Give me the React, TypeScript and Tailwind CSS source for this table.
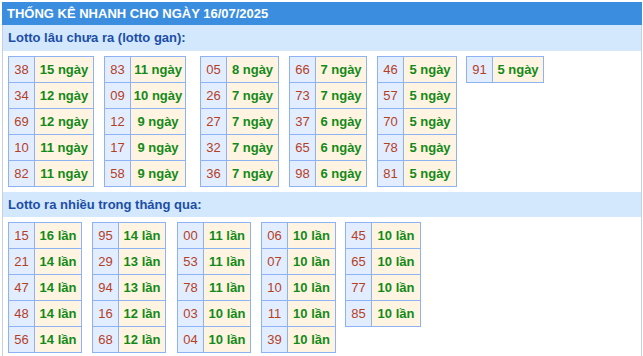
import React from "react";

type Row = [string, string];
type Tbl = { ml: string; dw: string; rows: Row[] };

const s1: Tbl[] = [
  { ml: "ml-[5px]", dw: "w-[59px]", rows: [["38", "15"], ["34", "12"], ["69", "12"], ["10", "11"], ["82", "11"]] },
  { ml: "ml-[10px]", dw: "w-[55px]", rows: [["83", "11"], ["09", "10"], ["12", "9"], ["17", "9"], ["58", "9"]] },
  { ml: "ml-[14px]", dw: "w-[52px]", rows: [["05", "8"], ["26", "7"], ["27", "7"], ["32", "7"], ["36", "7"]] },
  { ml: "ml-[10px]", dw: "w-[51px]", rows: [["66", "7"], ["73", "7"], ["37", "6"], ["65", "6"], ["98", "6"]] },
  { ml: "ml-[10px]", dw: "w-[53px]", rows: [["46", "5"], ["57", "5"], ["70", "5"], ["78", "5"], ["81", "5"]] },
  { ml: "ml-[9px]", dw: "w-[51px]", rows: [["91", "5"]] },
];

const s2: Tbl[] = [
  { ml: "ml-[5px]", dw: "w-[47px]", rows: [["15", "16"], ["21", "14"], ["47", "14"], ["48", "14"], ["56", "14"]] },
  { ml: "ml-[10px]", dw: "w-[47px]", rows: [["95", "14"], ["29", "13"], ["94", "13"], ["16", "12"], ["68", "12"]] },
  { ml: "ml-[11px]", dw: "w-[47px]", rows: [["00", "11"], ["53", "11"], ["78", "11"], ["03", "10"], ["04", "10"]] },
  { ml: "ml-[10px]", dw: "w-[48px]", rows: [["06", "10"], ["07", "10"], ["10", "10"], ["11", "10"], ["39", "10"]] },
  { ml: "ml-[9px]", dw: "w-[49px]", rows: [["45", "10"], ["65", "10"], ["77", "10"], ["85", "10"]] },
];

function Table({ t, unit }: { t: Tbl; unit: string }) {
  return (
    <div className={`${t.ml} flex flex-col border-l border-t border-[#8db3f4] self-start`}>
      {t.rows.map(([n, d], i) => (
        <div key={i} className="flex h-[26px]">
          <div className="w-[26px] flex items-center justify-center border-r border-b border-[#8db3f4] bg-[#e2eeff] text-[#b5401f] text-[13px]">
            {n}
          </div>
          <div className={`${t.dw} flex items-center justify-center border-r border-b border-[#8db3f4] bg-[#fff4e2] text-[#138a18] text-[13px] font-bold`}>
            {d} {unit}
          </div>
        </div>
      ))}
    </div>
  );
}

export default function App() {
  return (
    <div className="bg-white w-[643px] h-[356px] pt-[2px] overflow-hidden" style={{ fontFamily: '"Liberation Sans", Arial, sans-serif' }}>
      <div className="ml-[2px] w-[640px]">
        <div className="h-[23px] bg-[#3b8de0] text-white font-bold text-[13px] flex items-center pl-[5px]">
          THỐNG KÊ NHANH CHO NGÀY 16/07/2025
        </div>
        <div className="border-l border-r border-[#c5d0de] h-[340px]">
          <div className="h-[26px] bg-[#d3e8fc] text-[#1c4ea6] font-bold text-[13px] flex items-center pl-[5px]">
            Lotto lâu chưa ra (lotto gan):
          </div>
          <div className="flex pt-[5px] pb-[5px] h-[141px]">
            {s1.map((t, i) => (
              <Table key={i} t={t} unit="ngày" />
            ))}
          </div>
          <div className="h-[25px] bg-[#d3e8fc] text-[#1c4ea6] font-bold text-[13px] flex items-center pl-[5px]">
            Lotto ra nhiều trong tháng qua:
          </div>
          <div className="flex pt-[5px]">
            {s2.map((t, i) => (
              <Table key={i} t={t} unit="lần" />
            ))}
          </div>
        </div>
      </div>
    </div>
  );
}
